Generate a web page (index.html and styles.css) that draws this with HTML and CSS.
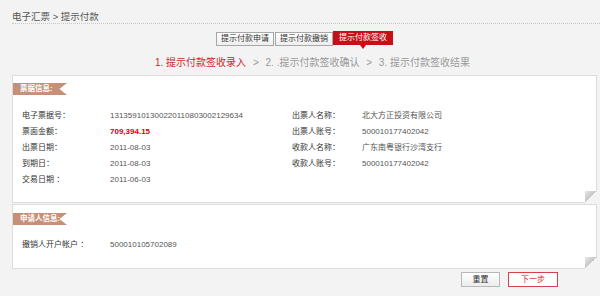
FILE: index.html
```html
<!DOCTYPE html>
<html>
<head>
    <meta charset="utf-8">
    <title>提示付款</title>
    <link rel="stylesheet" href="styles.css">
</head>
<body>
    <div class="crumb">电子汇票 &gt; 提示付款</div>

    <div class="tabs">
        <span class="tab">提示付款申请</span>
        <span class="tab">提示付款撤销</span>
        <span class="tab active">提示付款签收</span>
    </div>

    <div class="steps">
        <span class="step current">1. 提示付款签收录入</span>
        <span class="sep">&gt;</span>
        <span class="step">2. .提示付款签收确认</span>
        <span class="sep">&gt;</span>
        <span class="step">3. 提示付款签收结果</span>
    </div>

    <div class="card">
        <div class="ribbon">票据信息:</div>
        <div class="info-grid">
            <span class="label">电子票据号：</span><span class="value">131359101300220110803002129634</span>
            <span class="label">出票人名称：</span><span class="value">北大方正投资有限公司</span>

            <span class="label">票面金额：</span><span class="value amount">709,394.15</span>
            <span class="label">出票人账号：</span><span class="value">500010177402042</span>

            <span class="label">出票日期：</span><span class="value">2011-08-03</span>
            <span class="label">收款人名称：</span><span class="value">广东南粤银行沙湾支行</span>

            <span class="label">到期日：</span><span class="value">2011-08-03</span>
            <span class="label">收款人账号：</span><span class="value">500010177402042</span>

            <span class="label">交易日期 ：</span><span class="value">2011-06-03</span>
        </div>
    </div>

    <div class="card second">
        <div class="ribbon">申请人信息:</div>
        <div class="info-grid">
            <span class="label">撤销人开户帐户 ：</span><span class="value">500010105702089</span>
        </div>
    </div>

    <div class="actions">
        <button class="btn">重置</button>
        <button class="btn next">下一步</button>
    </div>
</body>
</html>
```

FILE: styles.css
```css
body {
    margin: 0;
    background-color: #f3f3f3;
    font-family: "Liberation Sans", "Noto Sans CJK SC", sans-serif;
    color: #333;
}
.crumb {
    margin-left: 12px;
    padding-top: 11px;
    font-size: 9.5px;
    line-height: 12px;
    color: #555;
    border-bottom: 1px dotted #c8c8c8;
}
.tabs {
    display: flex;
    align-items: flex-start;
    margin-top: 8px;
    padding-left: 216px;
    height: 18px;
}
.tab {
    display: block;
    height: 12px;
    padding: 0 4px;
    border: 1px solid #a8a8a8;
    background: linear-gradient(#fff, #eee);
    font-size: 8px;
    line-height: 12px;
    color: #333;
    margin-right: 1px;
}
.tab.active {
    position: relative;
    margin-right: 0;
    margin-left: -1px;
    padding: 0 6px;
    height: 14px;
    margin-top: -1px;
    line-height: 14px;
    border: none;
    background: #c70f16;
    color: #fff;
}
.tab.active::after {
    content: "";
    position: absolute;
    left: 50%;
    bottom: -4px;
    margin-left: -3px;
    border-left: 3px solid transparent;
    border-right: 3px solid transparent;
    border-top: 4px solid #c70f16;
}
.steps {
    padding-left: 155px;
    margin-top: 6px;
    font-size: 10px;
    line-height: 14px;
    color: #999;
}
.step.current {
    color: #d6232b;
}
.sep {
    margin: 0 4px;
}
.card {
    position: relative;
    margin: 5px 3px 0 12px;
    padding: 7px 9px 14px;
    background-color: #fff;
    border: 1px solid #dcdcdc;
}
.card::after {
    content: "";
    position: absolute;
    right: -1px;
    bottom: -1px;
    width: 12px;
    height: 12px;
    background: linear-gradient(to bottom right, #e8e8e8, #c4c4c4 50%, #f3f3f3 50%);
}
.card.second {
    margin-top: 1px;
    padding-top: 8px;
    padding-bottom: 15px;
}
.ribbon {
    width: 47px;
    height: 12px;
    margin-left: -9px;
    padding-left: 7px;
    background-color: #c68f78;
    clip-path: polygon(0 0, 100% 0, 86% 50%, 100% 100%, 0 100%);
    color: #fff;
    font-size: 7.5px;
    font-weight: bold;
    line-height: 12px;
}
.info-grid {
    display: grid;
    grid-template-columns: 88px 182px 70px auto;
    grid-auto-rows: 16px;
    margin-top: 13px;
    font-size: 8px;
    line-height: 16px;
}
.second .info-grid {
    margin-top: 12px;
}
.label {
    color: #333;
}
.value {
    color: #555;
}
.value.amount {
    color: #d00;
    font-weight: bold;
}
.actions {
    display: flex;
    justify-content: flex-end;
    gap: 8px;
    margin-top: 3px;
    padding-right: 42px;
}
.btn {
    height: 15px;
    padding: 0;
    width: 39px;
    border: 1px solid #b8b8b8;
    background: linear-gradient(#fff, #ececec);
    font-family: inherit;
    font-size: 8px;
    line-height: 13px;
    color: #333;
    cursor: pointer;
}
.btn.next {
    width: 50px;
    border-color: #d8404c;
    background: #fff;
    color: #d6232b;
}
```
